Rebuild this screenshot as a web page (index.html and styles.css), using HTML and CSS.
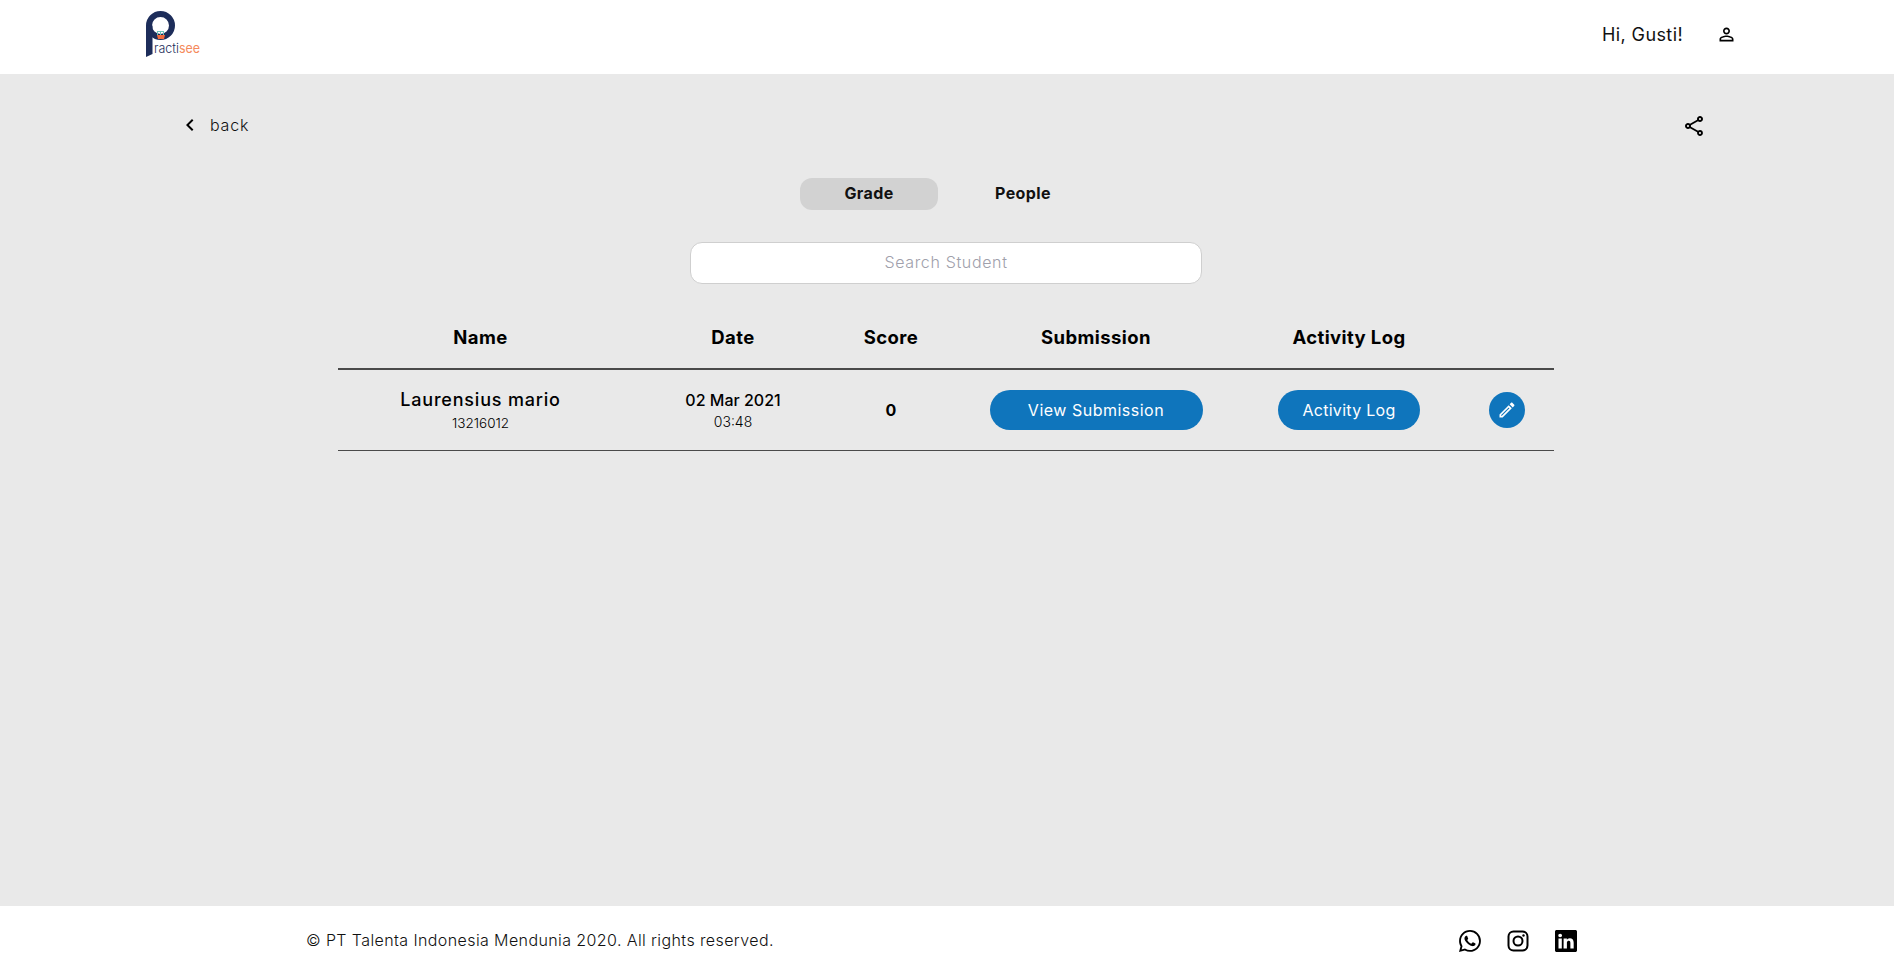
FILE: index.html
```html
<!DOCTYPE html>
<html lang="en">
  <head>
    <meta charset="UTF-8" />
    <title>Practisee - Grade</title>
    <link rel="stylesheet" href="styles.css">
  </head>
  <body>
    <header class="topbar">
      <svg class="logo" viewBox="0 0 54 47" width="54" height="47">
        <circle cx="14.5" cy="14.5" r="11.5" fill="none" stroke="#1d2d5a" stroke-width="6" />
        <path fill="#1d2d5a" d="M0 14.5h6.5V43L0 46z" />
        <path fill="#f26c3d" d="M11 24h8l-1 4h-6z" />
        <path fill="none" stroke="#6cc3bb" stroke-width="1" d="M11.5 24v-4M14.5 24v-4M17.5 24v-4M11 20.5h7" />
        <text class="logo-text" x="8" y="41.5" textLength="46" lengthAdjust="spacingAndGlyphs">racti<tspan class="logo-accent">see</tspan></text>
      </svg>
      <div class="user">
        <span class="user-name">Hi, Gusti!</span>
        <svg class="icon" viewBox="0 0 24 24" width="21" height="21"><path d="M12 5.9c1.16 0 2.1.94 2.1 2.1s-.94 2.1-2.1 2.1S9.9 9.16 9.9 8s.94-2.1 2.1-2.1m0 9c2.97 0 6.1 1.46 6.1 2.1v1.1H5.9V17c0-.64 3.13-2.1 6.1-2.1M12 4C9.79 4 8 5.79 8 8s1.79 4 4 4 4-1.79 4-4-1.79-4-4-4zm0 9c-2.67 0-8 1.34-8 4v3h16v-3c0-2.66-5.33-4-8-4z" /></svg>
      </div>
    </header>

    <main class="content">
      <div class="nav-row">
        <a class="back" href="#">
          <svg class="icon" viewBox="0 0 24 24" width="24" height="24"><path d="M15.41 7.41L14 6l-6 6 6 6 1.41-1.41L10.83 12z" /></svg>
          <span>back</span>
        </a>
        <svg class="icon share" viewBox="0 0 24 24" width="24" height="24"><path d="M18 16.08c-.76 0-1.44.3-1.96.77L8.91 12.7c.05-.23.09-.46.09-.7s-.04-.47-.09-.7l7.05-4.11c.54.5 1.25.81 2.04.81 1.66 0 3-1.34 3-3s-1.34-3-3-3-3 1.34-3 3c0 .24.04.47.09.7L8.04 9.81C7.5 9.31 6.79 9 6 9c-1.66 0-3 1.34-3 3s1.34 3 3 3c.79 0 1.5-.31 2.04-.81l7.12 4.16c-.05.21-.08.43-.08.65 0 1.61 1.31 2.92 2.92 2.92 1.61 0 2.92-1.31 2.92-2.92s-1.31-2.92-2.92-2.92zM18 4c.55 0 1 .45 1 1s-.45 1-1 1-1-.45-1-1 .45-1 1-1zM6 13c-.55 0-1-.45-1-1s.45-1 1-1 1 .45 1 1-.45 1-1 1zm12 7.02c-.55 0-1-.45-1-1s.45-1 1-1 1 .45 1 1-.45 1-1 1z" /></svg>
      </div>

      <div class="tabs">
        <div class="tab tab-active">Grade</div>
        <div class="tab">People</div>
      </div>

      <div class="search">
        <input type="text" class="search-input" placeholder="Search Student" />
      </div>

      <table class="grades">
        <colgroup>
          <col class="col-name" />
          <col class="col-date" />
          <col class="col-score" />
          <col class="col-submission" />
          <col class="col-log" />
          <col class="col-edit" />
        </colgroup>
        <thead>
          <tr>
            <th>Name</th>
            <th>Date</th>
            <th>Score</th>
            <th>Submission</th>
            <th>Activity Log</th>
            <th></th>
          </tr>
        </thead>
        <tbody>
          <tr>
            <td>
              <div class="student-name">Laurensius mario</div>
              <div class="student-id">13216012</div>
            </td>
            <td>
              <div class="date">02 Mar 2021</div>
              <div class="time">03:48</div>
            </td>
            <td class="score">0</td>
            <td><button type="button" class="btn btn-submission">View Submission</button></td>
            <td><button type="button" class="btn btn-log">Activity Log</button></td>
            <td class="edit-cell">
              <button type="button" class="btn-edit">
                <svg viewBox="0 0 24 24" width="20" height="20"><path fill="#fff" d="M14.06 9.02l.92.92L5.92 19H5v-.92l9.06-9.06M17.66 3c-.25 0-.51.1-.7.29l-1.83 1.83 3.75 3.75 1.83-1.83c.39-.39.39-1.02 0-1.41l-2.34-2.34c-.2-.2-.45-.29-.71-.29zm-3.6 3.19L3 17.25V21h3.75L17.81 9.94l-3.75-3.75z" /></svg>
              </button>
            </td>
          </tr>
        </tbody>
      </table>
    </main>

    <footer class="footer">
      <span class="copyright">© PT Talenta Indonesia Mendunia 2020. All rights reserved.</span>
      <div class="social">
        <svg class="icon" viewBox="0 0 16 16" width="22" height="22"><path d="M13.601 2.326A7.854 7.854 0 0 0 7.994 0C3.627 0 .068 3.558.064 7.926c0 1.399.366 2.76 1.057 3.965L0 16l4.204-1.102a7.933 7.933 0 0 0 3.79.965h.004c4.368 0 7.926-3.558 7.93-7.93A7.898 7.898 0 0 0 13.6 2.326zM7.994 14.521a6.573 6.573 0 0 1-3.356-.92l-.24-.144-2.494.654.666-2.433-.156-.251a6.56 6.56 0 0 1-1.007-3.505c0-3.626 2.957-6.584 6.591-6.584a6.56 6.56 0 0 1 4.66 1.931 6.557 6.557 0 0 1 1.928 4.66c-.004 3.639-2.961 6.592-6.592 6.592zm3.615-4.934c-.197-.099-1.17-.578-1.353-.646-.182-.065-.315-.099-.445.099-.133.197-.513.646-.627.775-.114.133-.232.148-.43.05-.197-.1-.836-.308-1.592-.985-.59-.525-.985-1.175-1.103-1.372-.114-.198-.011-.304.088-.403.087-.088.197-.232.296-.346.1-.114.133-.198.198-.33.065-.134.034-.248-.015-.347-.05-.099-.445-1.076-.612-1.47-.16-.389-.323-.335-.445-.34-.114-.007-.247-.007-.38-.007a.729.729 0 0 0-.529.247c-.182.198-.691.677-.691 1.654 0 .977.71 1.916.81 2.049.098.133 1.394 2.132 3.383 2.992.47.205.84.326 1.129.418.475.152.904.129 1.246.08.38-.058 1.171-.48 1.338-.943.164-.464.164-.86.114-.943-.049-.084-.182-.133-.38-.232z" /></svg>
        <svg viewBox="0 0 22 22" width="22" height="22" fill="none" stroke="#000" stroke-width="2">
          <rect x="1.5" y="1.5" width="19" height="19" rx="5" />
          <circle cx="11" cy="11" r="4.5" />
          <circle cx="16.5" cy="5.5" r="1.2" fill="#000" stroke="none" />
        </svg>
        <svg class="icon" viewBox="0 0 16 16" width="22" height="22"><path d="M0 1.146C0 .513.526 0 1.175 0h13.65C15.474 0 16 .513 16 1.146v13.708c0 .633-.526 1.146-1.175 1.146H1.175C.526 16 0 15.487 0 14.854V1.146zm4.943 12.248V6.169H2.542v7.225h2.401zm-1.2-8.212c.837 0 1.358-.554 1.358-1.248-.015-.709-.52-1.248-1.342-1.248-.822 0-1.359.54-1.359 1.248 0 .694.521 1.248 1.327 1.248h.016zm4.908 8.212V9.359c0-.216.016-.432.08-.586.173-.431.568-.878 1.232-.878.869 0 1.216.662 1.216 1.634v3.865h2.401V9.25c0-2.22-1.184-3.252-2.764-3.252-1.274 0-1.845.7-2.165 1.193v.025h-.016a5.54 5.54 0 0 1 .016-.025V6.169h-2.4c.03.678 0 7.225 0 7.225h2.4z" /></svg>
      </div>
    </footer>
  </body>
</html>
```

FILE: styles.css
```css
html,
body {
  height: 100%;
}
body {
  display: flex;
  flex-direction: column;
  min-height: 100vh;
  margin: 0;
  background: #e9e9e9;
  color: #000;
  font-family: "Inter", "Open Sans", sans-serif;
}
.icon {
  display: block;
  fill: #000;
}
.topbar {
  display: flex;
  align-items: center;
  justify-content: space-between;
  box-sizing: border-box;
  height: 74px;
  padding: 0 157px 6px 146px;
  background: #fff;
}
.logo-text {
  fill: #1d2d5a;
  font-size: 13px;
  font-weight: 300;
}
.logo-accent {
  fill: #f58a5c;
  font-weight: 400;
}
.user {
  display: flex;
  align-items: center;
  gap: 33px;
}
.user-name {
  font-size: 18px;
  letter-spacing: 0.4px;
  color: #111;
}
.content {
  flex: 1;
  padding-top: 39px;
}
.nav-row {
  display: flex;
  align-items: center;
  justify-content: space-between;
  padding: 0 188px 0 178px;
}
.share {
  margin: 1px 0 -1px;
}
.back {
  display: flex;
  align-items: center;
  gap: 8px;
  font-size: 16px;
  font-weight: 300;
  letter-spacing: 0.8px;
  color: #111;
  text-decoration: none;
}
.tabs {
  display: flex;
  justify-content: center;
  gap: 16px;
  margin-top: 41px;
  padding-right: 2px;
}
.tab {
  width: 138px;
  height: 32px;
  border-radius: 12px;
  font-size: 16px;
  font-weight: 700;
  letter-spacing: 0.4px;
  line-height: 31px;
  text-align: center;
  color: #111;
}
.tab-active {
  background: #d2d2d2;
}
.search {
  display: flex;
  justify-content: center;
  margin-top: 32px;
  padding-right: 2px;
}
.search-input {
  box-sizing: border-box;
  width: 512px;
  height: 42px;
  padding: 0 0 2px;
  border: 1px solid #cfcfcf;
  border-radius: 12px;
  background: #fff;
  font-family: inherit;
  font-size: 16px;
  letter-spacing: 0.65px;
  text-align: center;
}
.search-input::placeholder {
  color: #a0a0ab;
  font-weight: 300;
}
.grades {
  width: 1216px;
  margin: 30px 0 0 338px;
  border-collapse: collapse;
  table-layout: fixed;
}
.col-name {
  width: 285px;
}
.col-date {
  width: 220px;
}
.col-score {
  width: 96px;
}
.col-submission {
  width: 314px;
}
.col-log {
  width: 192px;
}
.col-edit {
  width: 109px;
}
th {
  height: 46px;
  padding: 0 0 8px;
  border-bottom: 2px solid #4a4a4a;
  font-size: 18.5px;
  font-weight: 700;
  letter-spacing: 0.4px;
}
td {
  height: 80px;
  padding: 0;
  border-bottom: 1px solid #4a4a4a;
  text-align: center;
}
.student-name {
  font-size: 18px;
  font-weight: 500;
  letter-spacing: 0.8px;
}
.student-id {
  margin-top: 5px;
  font-size: 13.5px;
  font-weight: 300;
}
.date {
  font-size: 16px;
  font-weight: 500;
}
.time {
  margin-top: 3px;
  font-size: 14px;
  font-weight: 300;
}
.score {
  font-size: 16px;
  font-weight: 700;
}
.btn {
  height: 40px;
  border: none;
  border-radius: 20px;
  background: #0f75bc;
  color: #fff;
  font-family: inherit;
  font-size: 16px;
  letter-spacing: 0.5px;
}
.btn-submission {
  width: 213px;
}
.btn-log {
  width: 142px;
  letter-spacing: 0.3px;
}
.edit-cell {
  padding-left: 15px;
}
.btn-edit {
  display: inline-flex;
  align-items: center;
  justify-content: center;
  width: 36px;
  height: 36px;
  padding: 0;
  border: none;
  border-radius: 50%;
  background: #0f75bc;
}
.footer {
  display: flex;
  align-items: center;
  justify-content: space-between;
  height: 66px;
  padding: 0 317px 0 306px;
  background: #fff;
}
.copyright {
  padding-top: 2px;
  font-size: 16px;
  font-weight: 300;
  letter-spacing: 0.4px;
  color: #111;
}
.social {
  display: flex;
  gap: 26px;
  padding-top: 3px;
}
```
